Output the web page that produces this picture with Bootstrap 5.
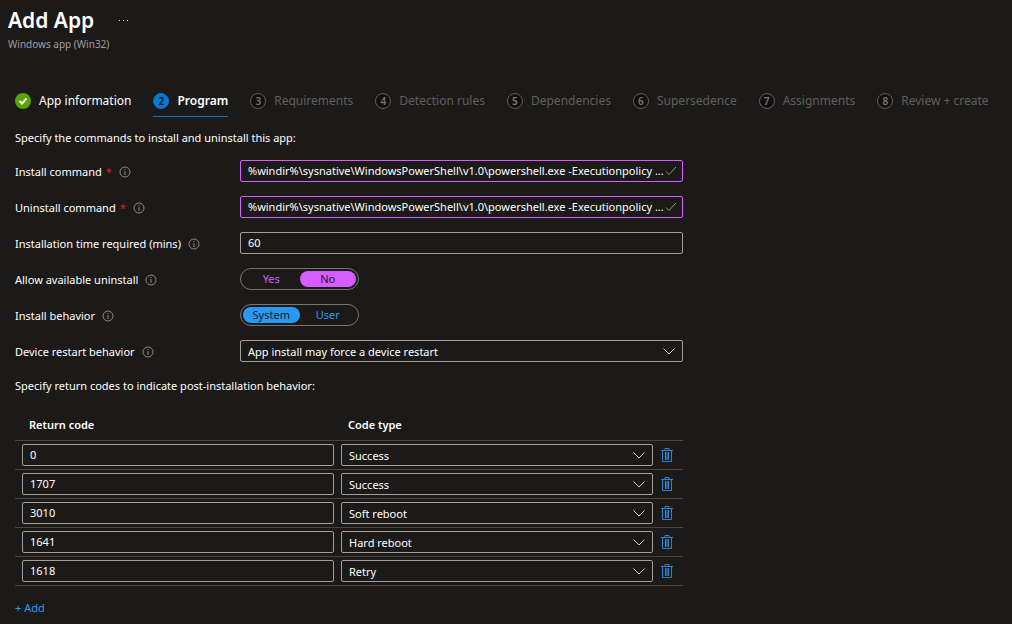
<!DOCTYPE html>
<html lang="en" data-bs-theme="dark">
<head>
<meta charset="utf-8">
<meta name="viewport" content="width=device-width, initial-scale=1">
<title>Add App</title>
<link rel="stylesheet" href="https://cdn.jsdelivr.net/npm/bootstrap@5.3.0/dist/css/bootstrap.min.css">
<style>
body{background:#1b1a19;color:#fff;font-family:"Noto Sans","Open Sans",sans-serif;font-size:11px;line-height:16px}
.page-title{font-size:21px;line-height:32px;font-weight:600}
.page-sub{font-size:10px;line-height:16px;color:#a19f9d}
.more-btn{width:20px;height:20px;color:#d2d0ce}
.wizard{margin:36px 0 13px}
.wizard ol{padding:0 15px;gap:22px}
.wizard a{height:29px;font-size:12px;color:#605e5c;text-decoration:none;border-bottom:1px solid transparent;padding-bottom:2px;gap:8px;white-space:nowrap}
.wizard a.done{color:#fff}
.wizard a.active{color:#fff;font-weight:600;border-color:#0078d4}
.step-no{width:16px;height:16px;line-height:14px;font-size:10px;font-weight:600;border:1px solid #605e5c;border-radius:50%;background:#11100f;color:#797775;text-align:center;flex:none}
.active .step-no{background:#0078d4;border-color:#0078d4;color:#11100f}
.panel{max-width:668px;margin-left:15px}
.intro{margin-bottom:14px}
.fields{display:grid;grid-template-columns:225px 1fr;row-gap:14px;align-items:center}
.field-label{padding-top:2px}
.info{color:#8a8886;margin-left:7px}
.req{color:#e81123;margin-left:4px}
.box.form-control,.box.form-select{height:22px;min-height:22px;font-size:11px;line-height:16px;padding:0 7px 2px;border:1px solid #a19f9d;border-radius:2px;background-color:#1b1a19;color:#fff}
.box.form-select{padding:2px 28px 0 7px;background-image:url("data:image/svg+xml,%3Csvg xmlns='http://www.w3.org/2000/svg' viewBox='0 0 12 12'%3E%3Cpath fill='none' stroke='%23d2d0ce' d='M.5 3.5 6 9l5.500-5.500'/%3E%3C/svg%3E");background-size:12px 12px;background-position:right 7px center}
.box.valid{border-color:#d65cff;padding-right:16px;text-overflow:ellipsis}
.tick{position:absolute;right:6px;top:5px;color:#7fa94e}
.pill{width:119px;height:22px;border:1px solid #797775;border-radius:11px;padding:2px}
.pill label{flex:1 1 0;height:16px;line-height:16px;border-radius:8px;text-align:center;color:#2899f5;cursor:pointer}
.pill input:checked+label{background:#2899f5;color:#1b1a19}
.pill.changed label{color:#d65cff}
.pill.changed input:checked+label{background:#d65cff;color:#1b1a19}
.codes-intro{margin:16px 0 15px}
.codes{--bs-table-bg:transparent;table-layout:fixed;border-color:#484644;vertical-align:middle;margin-bottom:14px}
.codes th{font-weight:600;color:#fff;padding:8px 14px 7px;height:31px}
.codes td{padding:3px 0 3px 7px;height:29px}
.codes .c-del{width:30px}
.bin{color:#2899f5;width:14px;height:16px}
.add-link{color:#2899f5;text-decoration:none}
</style>
</head>
<body>
<svg class="d-none">
<symbol id="i-info" viewBox="0 0 12 12"><circle cx="6" cy="6" r="5" fill="none" stroke="currentColor"/><path d="M6 5v4M6 3v1" stroke="currentColor"/></symbol>
<symbol id="i-tick" viewBox="0 0 12 12"><path d="M1 6.500 4 9.500 11 2" fill="none" stroke="currentColor"/></symbol>
<symbol id="i-bin" viewBox="0 0 14 16"><path d="M1 3.500h12M5 3.500v-2h4v2M2.500 3.500v11h9v-11" fill="none" stroke="currentColor" stroke-opacity=".85"/><path d="M5 5h4v8H5z" fill="currentColor" opacity=".45"/><path d="M5.500 5v8M8.500 5v8" stroke="currentColor" stroke-opacity=".85"/></symbol>
</svg>
<header class="px-2 pt-1">
<div class="d-flex align-items-center">
<h1 class="page-title mb-0">Add App</h1>
<button type="button" class="btn border-0 more-btn p-0 ms-4 d-flex align-items-center" aria-label="More"><svg width="12" height="4" viewBox="0 0 12 4" fill="currentColor"><path d="M1 2h1v1H1zM5 2h1v1H5zM9 2h1v1H9z"/></svg></button>
</div>
<div class="page-sub">Windows app (Win32)</div>
</header>
<nav class="wizard" aria-label="Steps">
<ol class="list-unstyled d-flex mb-0">
<li><a href="#" class="done d-flex align-items-center"><svg width="16" height="16" viewBox="0 0 16 16"><circle cx="8" cy="8" r="8" fill="#57a300"/><path d="M4.500 8 7 10.500 11.500 5.500" fill="none" stroke="#fff" stroke-width="2"/></svg>App information</a></li>
<li><a href="#" class="active d-flex align-items-center" aria-current="step"><span class="step-no">2</span>Program</a></li>
<li><a href="#" class="d-flex align-items-center"><span class="step-no">3</span>Requirements</a></li>
<li><a href="#" class="d-flex align-items-center"><span class="step-no">4</span>Detection rules</a></li>
<li><a href="#" class="d-flex align-items-center"><span class="step-no">5</span>Dependencies</a></li>
<li><a href="#" class="d-flex align-items-center"><span class="step-no">6</span>Supersedence</a></li>
<li><a href="#" class="d-flex align-items-center"><span class="step-no">7</span>Assignments</a></li>
<li><a href="#" class="d-flex align-items-center"><span class="step-no">8</span>Review + create</a></li>
</ol>
</nav>
<main class="panel">
<p class="intro">Specify the commands to install and uninstall this app:</p>
<form class="fields">
<div class="field-label d-flex align-items-center"><label for="inst">Install command<span class="req">*</span></label><svg class="info" width="12" height="12"><use href="#i-info"/></svg></div>
<div class="position-relative"><input id="inst" class="form-control box valid" value="%windir%\sysnative\WindowsPowerShell\v1.0\powershell.exe -Executionpolicy ..."><svg class="tick" width="12" height="12"><use href="#i-tick"/></svg></div>
<div class="field-label d-flex align-items-center"><label for="uninst">Uninstall command<span class="req">*</span></label><svg class="info" width="12" height="12"><use href="#i-info"/></svg></div>
<div class="position-relative"><input id="uninst" class="form-control box valid" value="%windir%\sysnative\WindowsPowerShell\v1.0\powershell.exe -Executionpolicy ..."><svg class="tick" width="12" height="12"><use href="#i-tick"/></svg></div>
<div class="field-label d-flex align-items-center"><label for="mins">Installation time required (mins)</label><svg class="info" width="12" height="12"><use href="#i-info"/></svg></div>
<div><input id="mins" class="form-control box" value="60"></div>
<div class="field-label d-flex align-items-center"><span id="l-allow">Allow available uninstall</span><svg class="info" width="12" height="12"><use href="#i-info"/></svg></div>
<div class="pill changed d-flex" role="radiogroup" aria-labelledby="l-allow"><input class="btn-check" type="radio" name="allow" id="yes"><label for="yes">Yes</label><input class="btn-check" type="radio" name="allow" id="no" checked><label for="no">No</label></div>
<div class="field-label d-flex align-items-center"><span id="l-behav">Install behavior</span><svg class="info" width="12" height="12"><use href="#i-info"/></svg></div>
<div class="pill d-flex" role="radiogroup" aria-labelledby="l-behav"><input class="btn-check" type="radio" name="behav" id="sys" checked><label for="sys">System</label><input class="btn-check" type="radio" name="behav" id="usr"><label for="usr">User</label></div>
<div class="field-label d-flex align-items-center"><label for="restart">Device restart behavior</label><svg class="info" width="12" height="12"><use href="#i-info"/></svg></div>
<div><select id="restart" class="form-select box"><option>App install may force a device restart</option></select></div>
</form>
<p class="codes-intro">Specify return codes to indicate post-installation behavior:</p>
<table class="table codes">
<thead><tr><th scope="col">Return code</th><th scope="col">Code type</th><th class="c-del" aria-label="Delete"></th></tr></thead>
<tbody>
<tr><td><input class="form-control box" aria-label="Return code" value="0"></td><td><select class="form-select box" aria-label="Code type"><option>Success</option></select></td><td><button type="button" class="btn p-0 border-0 d-flex bin" aria-label="Delete"><svg width="14" height="16"><use href="#i-bin"/></svg></button></td></tr>
<tr><td><input class="form-control box" aria-label="Return code" value="1707"></td><td><select class="form-select box" aria-label="Code type"><option>Success</option></select></td><td><button type="button" class="btn p-0 border-0 d-flex bin" aria-label="Delete"><svg width="14" height="16"><use href="#i-bin"/></svg></button></td></tr>
<tr><td><input class="form-control box" aria-label="Return code" value="3010"></td><td><select class="form-select box" aria-label="Code type"><option>Soft reboot</option></select></td><td><button type="button" class="btn p-0 border-0 d-flex bin" aria-label="Delete"><svg width="14" height="16"><use href="#i-bin"/></svg></button></td></tr>
<tr><td><input class="form-control box" aria-label="Return code" value="1641"></td><td><select class="form-select box" aria-label="Code type"><option>Hard reboot</option></select></td><td><button type="button" class="btn p-0 border-0 d-flex bin" aria-label="Delete"><svg width="14" height="16"><use href="#i-bin"/></svg></button></td></tr>
<tr><td><input class="form-control box" aria-label="Return code" value="1618"></td><td><select class="form-select box" aria-label="Code type"><option>Retry</option></select></td><td><button type="button" class="btn p-0 border-0 d-flex bin" aria-label="Delete"><svg width="14" height="16"><use href="#i-bin"/></svg></button></td></tr>
</tbody>
</table>
<a href="#" class="add-link">+ Add</a>
</main>
<script src="https://cdn.jsdelivr.net/npm/bootstrap@5.3.0/dist/js/bootstrap.bundle.min.js"></script>
</body>
</html>
